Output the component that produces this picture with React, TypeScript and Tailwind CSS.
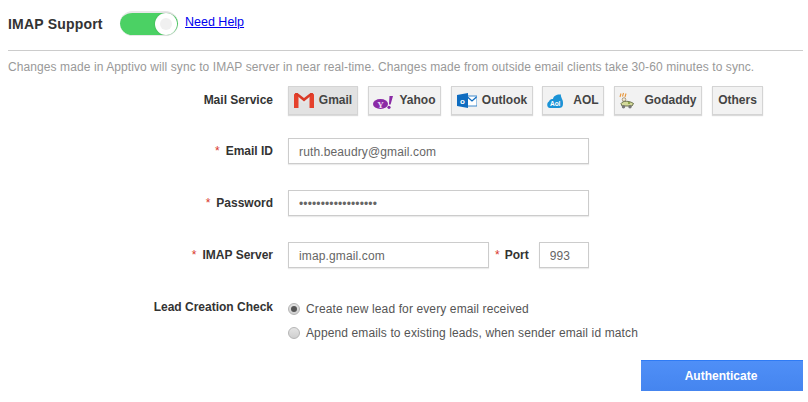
import React from "react";

const Gmail = () => (
  <svg width="20" height="15" viewBox="0 0 20 15" className="shrink-0">
    <path d="M0 1.5 L1.5 0 L3.5 0 L10 5 L16.5 0 L18.5 0 L20 1.5 V15 H15.5 V6.5 L10 10.5 L4.5 6.5 V15 H0 Z" fill="#e8e8e8" />
    <path d="M0 1.5 L1.5 0 L3 0 L4.5 1.2 V15 H0 Z M20 1.5 L18.5 0 L17 0 L15.5 1.2 V15 H20 Z" fill="#e5412c" />
    <path d="M1.5 0 L3.5 0 L10 5 L16.5 0 L18.5 0 L19 1 L10 8.5 L1 1 Z" fill="#d93a27" />
  </svg>
);
const Yahoo = () => (
  <svg width="20" height="13" viewBox="0 0 20 13" className="shrink-0 mt-[3px]">
    <ellipse cx="7.5" cy="8" rx="7.5" ry="5" fill="#8a2aa5" />
    <text x="7.5" y="11.5" fontSize="9" fontWeight="700" textAnchor="middle" fill="#ecdcf2" fontFamily="Liberation Serif">Y</text>
    <path d="M16.5 0 L20 0 L17.6 8.5 L16 8.5 Z" fill="#8a2aa5" />
    <circle cx="16" cy="11.3" r="1.6" fill="#8a2aa5" />
  </svg>
);
const Outlook = () => (
  <svg width="20" height="15" viewBox="0 0 20 15" className="shrink-0">
    <path d="M10 3 H20 V13 H10 Z" fill="#ffffff" stroke="#0e6cc0" strokeWidth="0.8" />
    <path d="M10.5 4 L15 8 L19.5 4" fill="none" stroke="#0e6cc0" strokeWidth="1.3" />
    <path d="M0 2 L11 0 V15 L0 13 Z" fill="#0e6cc0" />
    <text x="5.5" y="11" fontSize="8" fontWeight="700" textAnchor="middle" fill="#ffffff" fontFamily="Liberation Sans">o</text>
  </svg>
);
const Aol = () => (
  <svg width="16" height="14" viewBox="0 0 16 14" className="shrink-0">
    <path d="M3 14 C-0.5 14 -0.5 8.5 2 7.5 C2.5 5.5 4.5 5 6 5 C6.5 1.5 10 0 14 0.5 C13.5 2 14.5 3.5 15 5 C16 7 16 8 16 10 C16 13 14 14 12 14 Z" fill="#1b93d6" />
    <text x="8.2" y="11.5" fontSize="6.5" fontWeight="700" textAnchor="middle" fill="#ffffff" fontFamily="Liberation Sans">Aol</text>
  </svg>
);
const Godaddy = () => (
  <svg width="15" height="17" viewBox="0 0 15 17" className="shrink-0">
    <path d="M1 5 L2 1.5 M3.5 4.5 L4.5 1 M6 5 L7 1.5" stroke="#e8963a" strokeWidth="1.1" fill="none" />
    <circle cx="5" cy="7.5" r="1.8" fill="#f3ead8" stroke="#7d6a4a" strokeWidth="0.6" />
    <path d="M2 11.5 C4 8.5 10 8.5 14.5 11.5 L13 14 H3 Z" fill="#d3d99a" stroke="#4e5530" strokeWidth="0.8" />
    <circle cx="10" cy="11" r="1.1" fill="#7f9a3a" />
    <circle cx="4.5" cy="14.8" r="1.7" fill="#777" />
    <circle cx="11" cy="14.8" r="1.7" fill="#777" />
  </svg>
);

const services = [
  { name: "Gmail", icon: <Gmail />, w: "w-[70px]", gap: "gap-[5px]", active: true },
  { name: "Yahoo", icon: <Yahoo />, w: "w-[73px]", gap: "gap-[6px]" },
  { name: "Outlook", icon: <Outlook />, w: "w-[82px]", gap: "gap-[5px]" },
  { name: "AOL", icon: <Aol />, w: "w-[62px]", gap: "gap-[10px]" },
  { name: "Godaddy", icon: <Godaddy />, w: "w-[88px]", gap: "gap-[10px]" },
  { name: "Others", w: "w-[51px]", gap: "gap-0" },
];

const Label = ({ children, req, up }: { children: React.ReactNode; req?: boolean; up?: boolean }) => (
  <div className={`w-[265px] shrink-0 text-right text-[12px] font-bold text-[#333] leading-[16px] ${up ? "mb-[2px]" : ""}`}>
    {req && <span className="text-[#d9362b] font-normal mr-[6px]">*</span>}
    {children}
  </div>
);

const inputCls =
  "h-[26px] border border-[#ccc] bg-white pl-[10px] pt-px text-[12px] tracking-[0.13px] text-[#666] outline-none shadow-[0_1px_1px_rgba(0,0,0,0.08)] font-['Liberation_Sans',sans-serif]";

const Radio = ({ checked }: { checked?: boolean }) => (
  <span className="w-[12px] h-[12px] rounded-full border border-[#b5b5b5] bg-gradient-to-b from-[#e4e4e4] to-[#cfcfcf] flex items-center justify-center shrink-0">
    {checked && <span className="w-[6px] h-[6px] rounded-full bg-[#555]" />}
  </span>
);

export default function App() {
  return (
    <div className="w-[808px] h-[402px] bg-white overflow-hidden pl-[8px] pr-[5px] font-['Liberation_Sans',Arial,sans-serif]">
      <div className="flex items-start h-[50px] border-b border-[#ccc] box-content -mb-px">
        <div className="mt-[16px] w-[112px] text-[14px] font-bold tracking-[0.2px] leading-[17px] text-[#333]">IMAP Support</div>
        <div className="mt-[11px] w-[58px] h-[25px] rounded-full bg-[#4bd164] border-t-2 border-b border-[#e8e8e8] relative">
          <span className="absolute right-[1px] top-0 w-[22px] h-[22px] rounded-full bg-white shadow-[0_0_2px_rgba(0,0,0,0.2)] flex items-center justify-center">
            <span className="w-[12px] h-[12px] rounded-full bg-[#f0f0f0]" />
          </span>
        </div>
        <a className="ml-[7px] mt-[15px] text-[12.5px] leading-[15px] text-[#0000ee] underline" href="#">Need Help</a>
      </div>
      <p className="mt-[10px] text-[12px] tracking-[0.09px] leading-[14px] text-[#999] whitespace-nowrap">
        Changes made in Apptivo will sync to IMAP server in near real-time. Changes made from outside email clients take 30-60 minutes to sync.
      </p>

      <div className="mt-[12px] flex items-center h-[29px]">
        <Label up>Mail Service</Label>
        <div className="ml-[15px] flex">
          {services.map((s, i) => (
            <div
              key={s.name}
              className={`${s.w} ${s.gap} ${i === 0 ? "" : i === 3 ? "ml-[9px]" : "ml-[10px]"} h-[29px] flex items-center justify-center border border-[#d4d4d4] text-[12px] font-bold text-[#444] whitespace-nowrap shadow-[0_1px_1px_rgba(0,0,0,0.14)] ${s.active ? "bg-[#e2e2e2]" : "bg-[#f2f2f2]"}`}
            >
              {s.icon}
              <span className="mb-[2px]">{s.name}</span>
            </div>
          ))}
        </div>
      </div>

      <div className="mt-[23px] flex items-center h-[26px]">
        <Label req>Email ID</Label>
        <input readOnly value="ruth.beaudry@gmail.com" className={`${inputCls} ml-[15px] w-[301px]`} />
      </div>
      <div className="mt-[26px] flex items-center h-[26px]">
        <Label req>Password</Label>
        <input readOnly type="password" value="ruthbeaudrypasswor" className={`${inputCls} ml-[15px] w-[301px]`} />
      </div>
      <div className="mt-[26px] flex items-center h-[26px]">
        <Label req>IMAP Server</Label>
        <input readOnly value="imap.gmail.com" className={`${inputCls} ml-[15px] w-[201px]`} />
        <span className="ml-[6px] text-[#d9362b] text-[12px]">*</span>
        <span className="ml-[5px] w-[34px] text-[12px] font-bold text-[#333]">Port</span>
        <input readOnly value="993" className={`${inputCls} w-[50px]`} />
      </div>

      <div className="mt-[31px] flex items-start">
        <Label>Lead Creation Check</Label>
        <div className="ml-[15px] flex flex-col gap-[10px] mt-[3px]">
          <div className="flex items-center gap-[6px] h-[14px] text-[12px] tracking-[0.12px] text-[#555]"><Radio checked /><span>Create new lead for every email received</span></div>
          <div className="flex items-center gap-[6px] h-[14px] text-[12px] tracking-[0.12px] text-[#555]"><Radio /><span>Append emails to existing leads, when sender email id match</span></div>
        </div>
      </div>

      <div className="mt-[20px] flex justify-end">
        <button className="w-[162px] h-[31px] pr-[2px] bg-gradient-to-b from-[#4f8ff7] to-[#4585ef] border-t border-[#2f7bf5] text-white text-[12px] font-bold">Authenticate</button>
      </div>
    </div>
  );
}
